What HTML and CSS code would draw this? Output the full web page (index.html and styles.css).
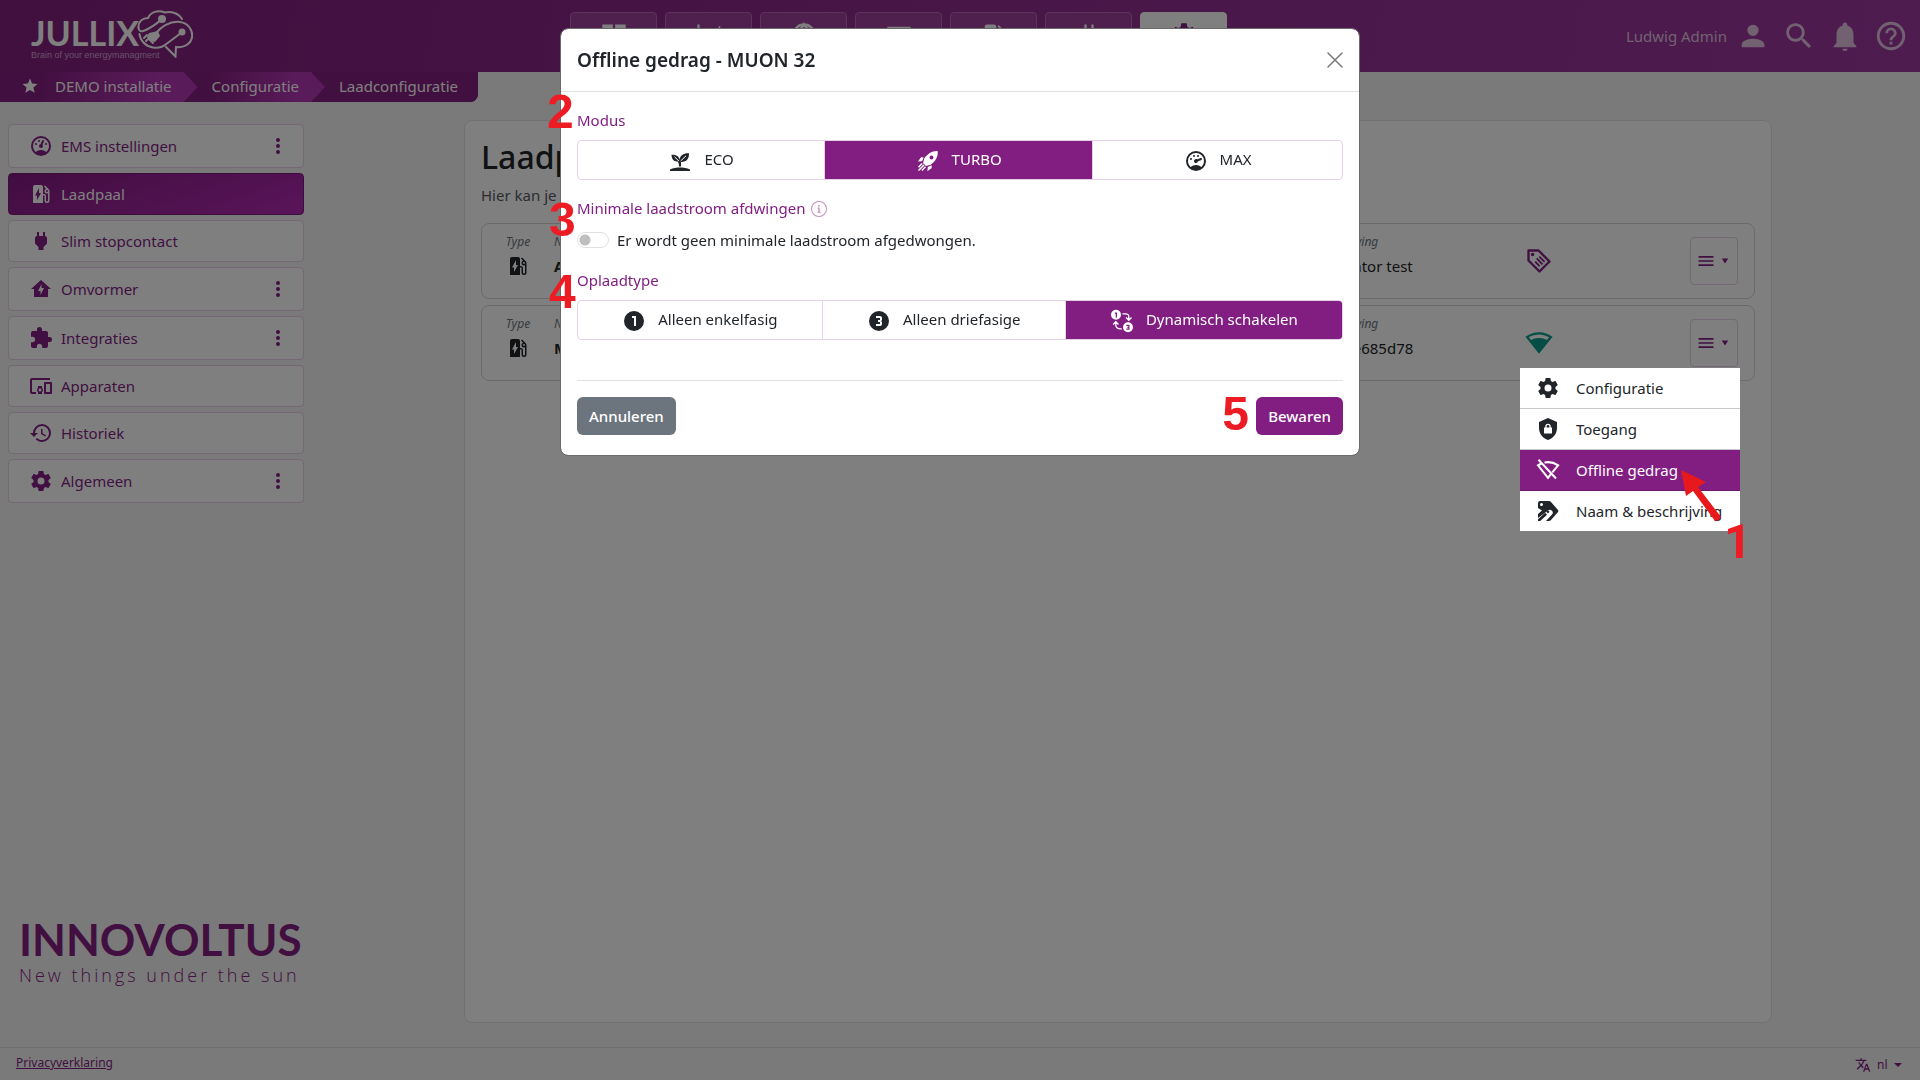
FILE: index.html
```html
<!DOCTYPE html>
<html lang="nl">
<head>
<meta charset="utf-8">
<meta name="viewport" content="width=device-width, initial-scale=1">
<title>Jullix - Laadconfiguratie</title>
<link rel="stylesheet" href="styles.css">
</head>
<body>
<svg class="sprite" aria-hidden="true">
  <symbol id="i-gauge" viewBox="0 0 24 24"><path d="M12,2A10,10 0 0,0 2,12A10,10 0 0,0 12,22A10,10 0 0,0 22,12A10,10 0 0,0 12,2M12,4A8,8 0 0,1 20,12C20,14.4 19,16.5 17.3,18C15.9,16.7 14,16 12,16C10,16 8.2,16.7 6.7,18C5,16.5 4,14.4 4,12A8,8 0 0,1 12,4M14,5.89C13.62,5.9 13.26,6.15 13.1,6.54L11.81,9.77L11.71,10C11,10.13 10.41,10.6 10.14,11.26C9.73,12.29 10.23,13.45 11.26,13.86C12.29,14.27 13.45,13.77 13.86,12.74C14.12,12.08 14,11.32 13.57,10.76L13.67,10.5L14.96,7.29L14.97,7.26C15.17,6.75 14.92,6.17 14.41,5.96C14.28,5.91 14.15,5.89 14,5.89M10,6A1,1 0 0,0 9,7A1,1 0 0,0 10,8A1,1 0 0,0 11,7A1,1 0 0,0 10,6M7,9A1,1 0 0,0 6,10A1,1 0 0,0 7,11A1,1 0 0,0 8,10A1,1 0 0,0 7,9M17,9A1,1 0 0,0 16,10A1,1 0 0,0 17,11A1,1 0 0,0 18,10A1,1 0 0,0 17,9Z"/></symbol>
  <symbol id="i-gauge-full" viewBox="0 0 24 24"><path d="M12,2A10,10 0 0,0 2,12A10,10 0 0,0 12,22A10,10 0 0,0 22,12A10,10 0 0,0 12,2M12,4A8,8 0 0,1 20,12C20,14.4 19,16.5 17.3,18C15.9,16.7 14,16 12,16C10,16 8.2,16.7 6.7,18C5,16.5 4,14.4 4,12A8,8 0 0,1 12,4M10,6A1,1 0 0,0 9,7A1,1 0 0,0 10,8A1,1 0 0,0 11,7A1,1 0 0,0 10,6M14,6A1,1 0 0,0 13,7A1,1 0 0,0 14,8A1,1 0 0,0 15,7A1,1 0 0,0 14,6M17.09,8.94C16.96,8.94 16.84,8.97 16.7,9L13.5,10.32L13.23,10.43C12.67,10 11.91,9.88 11.25,10.15C10.23,10.56 9.73,11.73 10.14,12.75C10.56,13.77 11.72,14.27 12.75,13.86C13.41,13.59 13.88,13 14,12.28L14.23,12.18L17.45,10.88L17.47,10.87C18,10.66 18.23,10.08 18.03,9.56C17.87,9.18 17.5,8.93 17.09,8.94M7,9A1,1 0 0,0 6,10A1,1 0 0,0 7,11A1,1 0 0,0 8,10A1,1 0 0,0 7,9Z"/></symbol>
  <symbol id="i-station" viewBox="0 0 24 24"><path d="M19.77,7.23L19.78,7.22L16.06,3.5L15,4.56L17.11,6.67C16.17,7.03 15.5,7.93 15.5,9A2.5,2.5 0 0,0 18,11.5C18.36,11.5 18.69,11.42 19,11.29V18.5A1,1 0 0,1 18,19.5A1,1 0 0,1 17,18.5V14A2,2 0 0,0 15,12H14V5A2,2 0 0,0 12,3H6A2,2 0 0,0 4,5V21H14V13.5H15.5V18.5A2.5,2.5 0 0,0 18,21A2.5,2.5 0 0,0 20.5,18.5V9C20.5,8.31 20.22,7.68 19.77,7.23M18,10A1,1 0 0,1 17,9A1,1 0 0,1 18,8A1,1 0 0,1 19,9A1,1 0 0,1 18,10M8,18V13.5H6L10,6V11H12L8,18Z"/></symbol>
  <symbol id="i-plug" viewBox="0 0 24 24"><path d="M16,7V3H14V7H10V3H8V7C7,7 6,8 6,9V14.5L9.5,18V21H14.5V18L18,14.5V9C18,8 17,7 16,7Z"/></symbol>
  <symbol id="i-home" viewBox="0 0 24 24"><path d="M12,3L2,12H5V20H19V12H22L12,3M11.5,18V14H9L12.5,7V11H15L11.5,18Z"/></symbol>
  <symbol id="i-puzzle" viewBox="0 0 24 24"><path d="M20.5,11H19V7C19,5.89 18.1,5 17,5H13V3.5A2.5,2.5 0 0,0 10.5,1A2.5,2.5 0 0,0 8,3.5V5H4A2,2 0 0,0 2,7V10.8H3.5C5,10.8 6.2,12 6.2,13.5C6.2,15 5,16.2 3.5,16.2H2V20A2,2 0 0,0 4,22H7.8V20.5C7.8,19 9,17.8 10.5,17.8C12,17.8 13.2,19 13.2,20.5V22H17A2,2 0 0,0 19,20V16H20.5A2.5,2.5 0 0,0 23,13.5A2.5,2.5 0 0,0 20.5,11Z"/></symbol>
  <symbol id="i-devices" viewBox="0 0 24 24"><path d="M3 6h18V4H3c-1.1 0-2 .9-2 2v12c0 1.1.9 2 2 2h4v-2H3V6zm10 6H9v1.78c-.61.55-1 1.33-1 2.22s.39 1.67 1 2.22V20h4v-1.78c.61-.55 1-1.34 1-2.22s-.39-1.67-1-2.22V12zm-2 5.5c-.83 0-1.5-.67-1.5-1.5s.67-1.5 1.5-1.5 1.5.67 1.5 1.5-.67 1.5-1.5 1.5zM22 8h-6c-.5 0-1 .5-1 1v10c0 .5.5 1 1 1h6c.5 0 1-.5 1-1V9c0-.5-.5-1-1-1zm-1 10h-4v-8h4v8z"/></symbol>
  <symbol id="i-history" viewBox="0 0 24 24"><path d="M13.5,8H12V13L16.28,15.54L17,14.33L13.5,12.25V8M13,3A9,9 0 0,0 4,12H1L4.96,16.03L9,12H6A7,7 0 0,1 13,5A7,7 0 0,1 20,12A7,7 0 0,1 13,19C11.07,19 9.32,18.21 8.06,16.94L6.64,18.36C8.27,20 10.5,21 13,21A9,9 0 0,0 22,12A9,9 0 0,0 13,3"/></symbol>
  <symbol id="i-cog" viewBox="0 0 24 24"><path d="M12,15.5A3.5,3.5 0 0,1 8.5,12A3.5,3.5 0 0,1 12,8.5A3.5,3.5 0 0,1 15.5,12A3.5,3.5 0 0,1 12,15.5M19.43,12.97C19.47,12.65 19.5,12.33 19.5,12C19.5,11.67 19.47,11.34 19.43,11L21.54,9.37C21.73,9.22 21.78,8.95 21.66,8.73L19.66,5.27C19.54,5.05 19.27,4.96 19.05,5.05L16.56,6.05C16.04,5.66 15.5,5.32 14.87,5.07L14.5,2.42C14.46,2.18 14.25,2 14,2H10C9.75,2 9.54,2.18 9.5,2.42L9.13,5.07C8.5,5.32 7.96,5.66 7.44,6.05L4.95,5.05C4.73,4.96 4.46,5.05 4.34,5.27L2.34,8.73C2.21,8.95 2.27,9.22 2.46,9.37L4.57,11C4.53,11.34 4.5,11.67 4.5,12C4.5,12.33 4.53,12.65 4.57,12.97L2.46,14.63C2.27,14.78 2.21,15.05 2.34,15.27L4.34,18.73C4.46,18.95 4.73,19.03 4.95,18.95L7.44,17.94C7.96,18.34 8.5,18.68 9.13,18.93L9.5,21.58C9.54,21.82 9.75,22 10,22H14C14.25,22 14.46,21.82 14.5,21.58L14.87,18.93C15.5,18.67 16.04,18.34 16.56,17.94L19.05,18.95C19.27,19.03 19.54,18.95 19.66,18.73L21.66,15.27C21.78,15.05 21.73,14.78 21.54,14.63L19.43,12.97Z"/></symbol>
  <symbol id="i-dots" viewBox="0 0 24 24"><circle cx="12" cy="6" r="2"/><circle cx="12" cy="12" r="2"/><circle cx="12" cy="18" r="2"/></symbol>
  <symbol id="i-star" viewBox="0 0 24 24"><path d="M12,17.27L18.18,21L16.54,13.97L22,9.24L14.81,8.62L12,2L9.19,8.62L2,9.24L7.45,13.97L5.82,21L12,17.27Z"/></symbol>
  <symbol id="i-account" viewBox="0 0 24 24"><path d="M12,4A4,4 0 0,1 16,8A4,4 0 0,1 12,12A4,4 0 0,1 8,8A4,4 0 0,1 12,4M12,14C16.42,14 20,15.79 20,18V20H4V18C4,15.79 7.58,14 12,14Z"/></symbol>
  <symbol id="i-search" viewBox="0 0 24 24"><path d="M15.5 14h-.79l-.28-.27C15.41 12.59 16 11.11 16 9.5 16 5.91 13.09 3 9.5 3S3 5.91 3 9.5 5.91 16 9.5 16c1.61 0 3.09-.59 4.23-1.57l.27.28v.79l5 4.99L20.49 19l-4.99-5zm-6 0C7.01 14 5 11.99 5 9.5S7.01 5 9.5 5 14 7.01 14 9.5 11.99 14 9.5 14z"/></symbol>
  <symbol id="i-bell" viewBox="0 0 24 24"><path d="M20,19V20H4V19L6,17V11C6,7.9 7.6,5.2 10.4,4.5V4A1.6,1.6 0 0,1 13.6,4V4.5C16.4,5.2 18,7.9 18,11V17L20,19M14,21A2,2 0 0,1 12,22.6A2,2 0 0,1 10,21"/></symbol>
  <symbol id="i-help" viewBox="0 0 24 24"><path d="M11,18H13V16H11V18M12,2A10,10 0 0,0 2,12A10,10 0 0,0 12,22A10,10 0 0,0 22,12A10,10 0 0,0 12,2M12,20C7.59,20 4,16.41 4,12C4,7.59 7.59,4 12,4C16.41,4 20,7.59 20,12C20,16.41 16.41,20 12,20M12,6A4,4 0 0,0 8,10H10A2,2 0 0,1 12,8A2,2 0 0,1 14,10C14,12 11,11.75 11,15H13C13,12.75 16,12.5 16,10A4,4 0 0,0 12,6Z"/></symbol>
  <symbol id="i-board" viewBox="0 0 24 24"><path d="M2 3h9v9H2zM13 3h9v9h-9zM2 14h9v7H2zM13 14h9v7h-9z"/></symbol>
  <symbol id="i-chart" viewBox="0 0 24 24"><path d="M2 3h2v16h18v2H2zM6 16l5-6 4 3 6-9 1 1-7 11-4-3-4 5z"/></symbol>
  <symbol id="i-globe" viewBox="0 0 24 24"><path fill="none" stroke="currentColor" stroke-width="2" d="M12 3a9 9 0 1 0 0 18 9 9 0 0 0 0-18M4 9c4-1 7-3 8-6 2 3 5 6 8 6M8 20c-2-7 0-13 4-17 4 4 6 10 4 17"/></symbol>
  <symbol id="i-battery" viewBox="0 0 24 24"><path d="M2 5h20v4H2zM2 11h20v9H2z"/></symbol>
  <symbol id="i-menu" viewBox="0 0 24 24"><path d="M3 6h18v2H3zM3 11h18v2H3zM3 16h18v2H3z"/></symbol>
  <symbol id="i-caret" viewBox="0 0 10 10"><path d="M1 2h8l-4 6z"/></symbol>
  <symbol id="i-tag" viewBox="0 0 24 24"><path fill="none" stroke="currentColor" stroke-width="2" stroke-linejoin="round" d="M3 3h8.600l9.400 9.400-8.600 8.600L3 11.600z"/><circle cx="6.500" cy="6.500" r="1.500"/><path fill="none" stroke="currentColor" stroke-width="1.500" d="M12.300 8.200l4.500 4.500M10 9.800l5 5M8.700 12.500l3.800 3.800"/></symbol>
  <symbol id="i-wifi" viewBox="0 0 24 24"><path fill-rule="evenodd" d="M12,2.700C7.790,2.700 3.700,4.110 .38,6.700L12,21.200 23.650,6.700C20.320,4.110 16.220,2.700 12,2.700M12,4.700C15.070,4.700 18.090,5.560 20.710,7.150L18.770,9.500C17,8.600 14.700,7.800 12,7.800 9.270,7.800 7,8.600 5.210,9.500L3.270,7.140C5.910,5.550 8.930,4.700 12,4.700Z"/></symbol>
  <symbol id="i-wifi-off" viewBox="0 0 24 24"><path fill="none" stroke="currentColor" stroke-width="2" d="M2.500 1.800L20 20.500M8.500 4.500C13 3.600 18 4.500 22.200 7.300L16.300 14.300M5.400 5.500L2 7.300 12 19.800 14.800 16.200"/></symbol>
  <symbol id="i-shield" viewBox="0 0 24 24"><path fill-rule="evenodd" d="M12,1L3,5V11C3,16.550 6.840,21.740 12,23 17.160,21.740 21,16.550 21,11V5L12,1M9.300,10V9.500A2.700,2.700 0 0 1 14.700,9.500V10.500H16V16.500H8V10.500H9.300M10.600,10.500H13.400V9.500A1.400,1.400 0 0 0 10.600,9.500Z"/></symbol>
  <symbol id="i-tag-edit" viewBox="0 0 24 24"><path fill-rule="evenodd" d="M2 4a2 2 0 0 1 2-2h9a3 3 0 0 1 2 1l7 8a1.500 1.500 0 0 1 0 2l-7 8a3 3 0 0 1-3 1h-2l6-6.500a2.600 2.600 0 0 0-4.300-3.700L2 19v-4l4-3.500L2 9zM5.500 4A1.500 1.500 0 1 0 5.500 7 1.500 1.500 0 0 0 5.500 4"/><path d="M2 20.300l7.200-6.500 1.800 1.900L4.200 22H2zM10.300 12.800l1-1q.9-.6 1.600.2t0 1.600l-1 1z"/></symbol>
  <symbol id="i-sprout" viewBox="0 0 24 24"><path d="M2 22v-1.500c3-1.400 6.500-1.900 10-1.900s7 .5 10 1.900V22zM11 17.500c0-2-.2-3.500-1.300-5C5.500 13 3.700 9.500 3.500 5.800c3.800-.3 7.600 1 8 5C12 6.500 15.500 3.900 21 4.200c.2 5.600-2.500 9-8 8.700V17.500z"/><path d="M6.500 7.800l4.500 4.400M18 6.900l-5.300 5" stroke="#fff" stroke-width="1"/></symbol>
  <symbol id="i-rocket" viewBox="0 0 24 24"><path fill-rule="evenodd" d="M21.700 2.100C16 1.800 11.500 5 8.300 9.500L7 14l3 3 4.700-1.300C19.500 12.500 22.200 8 21.700 2.100M15.500 6.500a2 2 0 1 1 0 4 2 2 0 0 1 0-4M7.800 8.400L5 8.300 2 12.600l4-.4zM15.600 16.200l.1 2.800-4.300 3.200.4-4.200z"/><path fill="none" stroke="currentColor" stroke-width="1.500" d="M6.200 14.500L2.500 18.200M8 16L2.500 21.500M9.500 17.800L5.800 21.500"/></symbol>
  <symbol id="i-one" viewBox="0 0 24 24"><path fill-rule="evenodd" d="M12 2a10 10 0 1 0 0 20 10 10 0 0 0 0-20M10 7h4v10h-2V9h-2z"/></symbol>
  <symbol id="i-three" viewBox="0 0 24 24"><path fill-rule="evenodd" d="M12 2a10 10 0 1 0 0 20 10 10 0 0 0 0-20M9 7h4a2 2 0 0 1 2 2v1.500a1.500 1.500 0 0 1-1.500 1.500 1.500 1.500 0 0 1 1.500 1.500V15a2 2 0 0 1-2 2H9v-2h4v-2h-2v-2h2V9H9z"/></symbol>
  <symbol id="i-switch" viewBox="0 0 24 24"><path fill-rule="evenodd" d="M6 .8a5 5 0 1 0 0 10 5 5 0 0 0 0-10M4.800 3.500h2.200v5H5.700V4.800h-.9zM18 13.200a5 5 0 1 0 0 10 5 5 0 0 0 0-10M16.300 15.700h3.200v5h-3.200v-1.200h1.900v-.8h-1v-1h1v-.8h-1.900z"/><path fill="none" stroke="currentColor" stroke-width="1.300" d="M12.500 4.800h3q3.300 0 3.300 3v3M16 8.500l2.800 2.800 2.700-2.800M11.800 19.800h-2q-4-.2-4-4v-2.500M3.200 15.500l2.600-2.700 2.700 2.700"/></symbol>
  <symbol id="i-info" viewBox="0 0 16 16"><path d="M8 15A7 7 0 1 1 8 1a7 7 0 0 1 0 14m0 1A8 8 0 1 0 8 0a8 8 0 0 0 0 16"/><path d="M6.500 6.600h2.200v4.200h1v1H6.300v-1h1V7.600h-.8zM7.200 4h1.500v1.600H7.200z"/></symbol>
  <symbol id="i-close" viewBox="0 0 16 16"><path fill="none" stroke="currentColor" stroke-width="1.500" stroke-linecap="round" d="M1 1l14 14M15 1L1 15"/></symbol>
  <symbol id="i-translate" viewBox="0 0 24 24"><path d="M12.870 15.070l-2.540-2.510.03-.03c1.740-1.940 2.980-4.170 3.710-6.530H17V4h-7V2H8v2H1v1.990h11.170C11.500 7.920 10.440 9.750 9 11.350 8.070 10.320 7.300 9.190 6.690 8h-2c.73 1.630 1.730 3.170 2.980 4.560l-5.090 5.020L4 19l5-5 3.110 3.110.76-2.040zM18.500 10h-2L12 22h2l1.120-3h4.750L21 22h2l-4.500-12zm-2.620 7l1.620-4.330L19.120 17h-3.240z"/></symbol>
</svg>

<header class="topbar">
  <a class="brand" href="#" aria-label="Jullix">
    <span class="brand-words"><span class="brand-name">JULLIX</span><span class="brand-tag">Brain of your energymanagment</span></span>
    <svg class="brain" viewBox="0 0 56 48" aria-hidden="true">
      <g fill="none" stroke="currentColor" stroke-width="2" stroke-linecap="round">
        <path d="M1.500 18C1 11 6 8 11 8 14 1.500 21 0 28 2.500 33 1 41 2.500 45 9"/>
        <path d="M1.500 18Q2 22 6 21C13 19 19 14 24 10"/>
        <path d="M2.500 24C3 30 8 36 16 37.500 22 38.500 26 37 30 33.500L44 23"/>
        <path d="M18 24C26 15 34 11 43 12 51 13 56 20 55 27 54 34 47 38 39 37L38.500 46.500 29 37"/>
        <path d="M9 31l3-3M10 25l-3 3M16 33l-4-4"/>
      </g>
      <circle cx="25" cy="9" r="4"/><circle cx="45" cy="22" r="3.500"/>
      <path d="M12 23l9-2 2 5-5 6-5-1-3-4z"/>
    </svg>
  </a>
  <nav class="tabs" aria-label="Hoofdmenu">
    <a class="tab" href="#" aria-label="Dashboard"><svg class="icon-lg"><use href="#i-board"/></svg></a>
    <a class="tab" href="#" aria-label="Grafieken"><svg class="icon-lg"><use href="#i-chart"/></svg></a>
    <a class="tab" href="#" aria-label="Energie"><svg class="icon-lg"><use href="#i-globe"/></svg></a>
    <a class="tab" href="#" aria-label="Batterij"><svg class="icon-lg"><use href="#i-battery"/></svg></a>
    <a class="tab" href="#" aria-label="Laden"><svg class="icon-lg"><use href="#i-station"/></svg></a>
    <a class="tab" href="#" aria-label="Stopcontacten"><svg class="icon-lg"><use href="#i-plug"/></svg></a>
    <a class="tab tab-active" href="#" aria-label="Configuratie"><svg class="icon-lg"><use href="#i-cog"/></svg></a>
  </nav>
  <div class="account">
    <a class="account-link" href="#">Ludwig Admin <svg class="icon-xl"><use href="#i-account"/></svg></a>
    <button class="bare" type="button" aria-label="Zoeken"><svg class="icon-xl"><use href="#i-search"/></svg></button>
    <button class="bare" type="button" aria-label="Meldingen"><svg class="icon-xl"><use href="#i-bell"/></svg></button>
    <button class="bare" type="button" aria-label="Hulp"><svg class="icon-xl"><use href="#i-help"/></svg></button>
  </div>
</header>

<nav class="crumbs" aria-label="Kruimelpad">
  <a class="crumb crumb-first" href="#"><svg class="icon-sm"><use href="#i-star"/></svg>DEMO installatie</a>
  <a class="crumb" href="#">Configuratie</a>
  <a class="crumb crumb-last" href="#" aria-current="page">Laadconfiguratie</a>
</nav>

<div class="layout">
  <aside class="sidebar">
    <nav class="side-nav" aria-label="Configuratie">
      <a class="side-item has-more" href="#"><svg class="icon"><use href="#i-gauge"/></svg><span>EMS instellingen</span><svg class="icon"><use href="#i-dots"/></svg></a>
      <a class="side-item side-active" href="#"><svg class="icon"><use href="#i-station"/></svg><span>Laadpaal</span></a>
      <a class="side-item" href="#"><svg class="icon"><use href="#i-plug"/></svg><span>Slim stopcontact</span></a>
      <a class="side-item has-more" href="#"><svg class="icon"><use href="#i-home"/></svg><span>Omvormer</span><svg class="icon"><use href="#i-dots"/></svg></a>
      <a class="side-item has-more" href="#"><svg class="icon"><use href="#i-puzzle"/></svg><span>Integraties</span><svg class="icon"><use href="#i-dots"/></svg></a>
      <a class="side-item" href="#"><svg class="icon"><use href="#i-devices"/></svg><span>Apparaten</span></a>
      <a class="side-item" href="#"><svg class="icon"><use href="#i-history"/></svg><span>Historiek</span></a>
      <a class="side-item has-more" href="#"><svg class="icon"><use href="#i-cog"/></svg><span>Algemeen</span><svg class="icon"><use href="#i-dots"/></svg></a>
    </nav>
    <div class="company">
      <div class="company-name">INNOVOLTUS</div>
      <div class="company-tag">New things under the sun</div>
    </div>
  </aside>

  <main class="panel">
    <h1>Laadpalen</h1>
    <p class="lead">Hier kan je de laadpalen beheren.</p>
    <div class="chargers">
      <article class="charger">
        <div class="cell cell-type"><span class="cell-label">Type</span><svg class="icon"><use href="#i-station"/></svg></div>
        <div class="cell"><span class="cell-label">Naam</span><strong>ALFEN</strong></div>
        <div class="cell"><span class="cell-label">Beschrijving</span><span>Simulator test</span></div>
        <svg class="icon-lg state"><use href="#i-tag"/></svg>
        <div class="actions">
          <button class="menu-button" type="button" aria-label="Acties"><svg class="icon-md"><use href="#i-menu"/></svg><svg class="caret"><use href="#i-caret"/></svg></button>
        </div>
      </article>
      <article class="charger">
        <div class="cell cell-type"><span class="cell-label">Type</span><svg class="icon"><use href="#i-station"/></svg></div>
        <div class="cell"><span class="cell-label">Naam</span><strong>MUON 32</strong></div>
        <div class="cell"><span class="cell-label">Beschrijving</span><span>d4cf7e685d78</span></div>
        <svg class="icon-lg state state-online"><use href="#i-wifi"/></svg>
        <div class="actions">
          <button class="menu-button" type="button" aria-label="Acties" aria-expanded="true"><svg class="icon-md"><use href="#i-menu"/></svg><svg class="caret"><use href="#i-caret"/></svg></button>
          <div class="menu">
            <button class="menu-item" type="button"><svg class="icon"><use href="#i-cog"/></svg>Configuratie</button>
            <button class="menu-item" type="button"><svg class="icon"><use href="#i-shield"/></svg>Toegang</button>
            <button class="menu-item menu-current" type="button"><svg class="icon"><use href="#i-wifi-off"/></svg>Offline gedrag</button>
            <button class="menu-item" type="button"><svg class="icon"><use href="#i-tag-edit"/></svg>Naam &amp; beschrijving</button>
            <svg class="pointer" viewBox="0 0 42 52" aria-hidden="true"><path d="M0 0l25 12-8 5L40 47l-2 3-4 1L12 21l-7 5z"/></svg>
            <span class="step step-1">1</span>
          </div>
        </div>
      </article>
    </div>
  </main>
</div>

<footer class="footer">
  <a href="#">Privacyverklaring</a>
  <label class="language"><svg class="icon-xs"><use href="#i-translate"/></svg>
    <select aria-label="Taal"><option>nl</option></select>
    <svg class="language-caret" viewBox="0 0 8 4"><path d="M0 0h8L4 4z"/></svg>
  </label>
</footer>

<div class="backdrop">
  <section class="dialog" role="dialog" aria-modal="true" aria-labelledby="dialog-title">
    <div class="dialog-head">
      <h2 id="dialog-title">Offline gedrag - MUON 32</h2>
      <button class="bare close" type="button" aria-label="Sluiten"><svg class="icon-close"><use href="#i-close"/></svg></button>
    </div>
    <form class="dialog-body">
      <fieldset class="field">
        <legend>Modus</legend>
        <div class="segments">
          <label class="segment"><input type="radio" name="mode"><svg class="icon"><use href="#i-sprout"/></svg>ECO</label>
          <label class="segment"><input type="radio" name="mode" checked><svg class="icon"><use href="#i-rocket"/></svg>TURBO</label>
          <label class="segment"><input type="radio" name="mode"><svg class="icon"><use href="#i-gauge-full"/></svg>MAX</label>
        </div>
        <span class="step step-2">2</span>
      </fieldset>
      <fieldset class="field">
        <legend>Minimale laadstroom afdwingen <svg class="icon-info"><use href="#i-info"/></svg></legend>
        <label class="switch-row"><input class="switch" type="checkbox">Er wordt geen minimale laadstroom afgedwongen.</label>
        <span class="step step-3">3</span>
      </fieldset>
      <fieldset class="field">
        <legend>Oplaadtype</legend>
        <div class="segments">
          <label class="segment"><input type="radio" name="phase"><svg class="icon"><use href="#i-one"/></svg>Alleen enkelfasig</label>
          <label class="segment"><input type="radio" name="phase"><svg class="icon"><use href="#i-three"/></svg>Alleen driefasige</label>
          <label class="segment"><input type="radio" name="phase" checked><svg class="icon"><use href="#i-switch"/></svg>Dynamisch schakelen</label>
        </div>
        <span class="step step-4">4</span>
      </fieldset>
      <div class="dialog-actions">
        <button class="btn btn-grey" type="button">Annuleren</button>
        <span class="save"><button class="btn btn-primary" type="submit">Bewaren</button><span class="step step-5">5</span></span>
      </div>
    </form>
  </section>
</div>
</body>
</html>
```
FILE: styles.css
```css
:root {
  --purple: #821e82;
  --purple-deep: #842080;
  --purple-light: #b436b6;
  --purple-border: #e6d0e6;
  --ink: #212529;
  --line: #dee0e4;
  --red: #ed1c24;
}

* { box-sizing: border-box; }

body {
  margin: 0;
  min-height: 100vh;
  display: flex;
  flex-direction: column;
  background: #f5f5f5;
  color: var(--ink);
  font: 15px/24px "Noto Sans", "Open Sans", sans-serif;
}

button, select { font: inherit; color: inherit; }
a { color: inherit; text-decoration: none; }
svg { fill: currentColor; flex: none; display: block; }

.sprite { display: none; }
.icon { width: 24px; height: 24px; }
.icon-xs { width: 16px; height: 16px; }
.icon-sm { width: 18px; height: 18px; }
.icon-md { width: 20px; height: 20px; }
.icon-lg { width: 28px; height: 28px; }
.icon-xl { width: 34px; height: 34px; }
.icon-info, .icon-close { width: 16px; height: 16px; }
.caret { width: 8px; height: 8px; }

.bare {
  padding: 0;
  border: 0;
  background: none;
}

/* Top bar */
.topbar {
  display: grid;
  grid-template-columns: 14fr auto 17fr;
  height: 72px;
  background: linear-gradient(100deg, #84207e, #9c389e);
}

.brand {
  display: flex;
  align-items: flex-start;
  padding: 10px 0 0 31px;
  color: #fff;
}
.brand-words {
  display: flex;
  flex-direction: column;
  width: 106px;
  padding-top: 5px;
  white-space: nowrap;
}
.brand-name { font: 700 34px/35px Lato, sans-serif; }
.brand-tag { font: 9px/10px "Liberation Sans", sans-serif; color: #d0a0d0; }
.brain { width: 56px; height: 48px; }

.tabs { display: flex; gap: 8px; padding-top: 12px; }
.tab {
  display: flex;
  justify-content: center;
  width: 87px;
  height: 48px;
  padding-top: 8px;
  border: 1px solid #b868b4;
  border-radius: 4px;
  background: #9e3e9c;
  color: #fff;
}
.tab-active { background: #fff; border-color: #fff; color: var(--purple); }

.account {
  display: flex;
  justify-content: flex-end;
  align-items: center;
  gap: 12px;
  padding-right: 12px;
  color: #e3c3e3;
}
.account-link { display: flex; align-items: center; gap: 9px; }

/* Breadcrumb trail */
.crumbs {
  display: flex;
  align-self: flex-start;
  height: 30px;
  border-bottom-right-radius: 8px;
  background: var(--purple-deep);
  overflow: hidden;
  color: #fff;
}
.crumb {
  display: flex;
  align-items: center;
  gap: 16px;
  margin-left: -14px;
  padding: 0 26px 2px 28px;
  background: linear-gradient(90deg, var(--purple-deep) 20%, var(--purple-light) 80%);
  clip-path: polygon(0 0, calc(100% - 14px) 0, 100% 50%, calc(100% - 14px) 100%, 0 100%);
}
.crumb:nth-child(1) { z-index: 3; }
.crumb:nth-child(2) { z-index: 2; }
.crumb-first { margin-left: 0; padding-left: 21px; }
.crumb-last { padding-right: 20px; background: var(--purple-deep); clip-path: none; }

/* Page body */
.layout { flex: 1; display: flex; }

.sidebar {
  flex: none;
  width: 316px;
  display: flex;
  flex-direction: column;
  justify-content: space-between;
  padding: 22px 12px 60px 8px;
}
.side-nav { display: flex; flex-direction: column; gap: 5px; }
.side-item {
  display: flex;
  align-items: center;
  gap: 8px;
  padding: 8px 13px 8px 20px;
  border: 1px solid var(--purple-border);
  border-radius: 4px;
  background: #fff;
  color: var(--purple);
}
.side-item span { flex: 1; }
.has-more { padding-top: 9px; padding-bottom: 9px; }
.side-active {
  border-color: #7a1a7a;
  background: linear-gradient(160deg, #821a80, #b42ab4);
  color: #fff;
}

.company { padding-left: 11px; color: var(--purple-deep); white-space: nowrap; }
.company-name { font: 700 44px/48px Lato, sans-serif; }
.company-tag { font: 300 18px/24px "Open Sans", sans-serif; letter-spacing: 3px; }

.panel {
  flex: 1;
  max-width: 1308px;
  margin: 18px auto 24px;
  padding: 16px;
  border: 1px solid #e2e2e2;
  border-radius: 8px;
  background: #fff;
}
h1 { margin: 0; font-size: 32px; line-height: 40px; font-weight: 500; }
.lead { margin: 6px 0 16px; color: #555a60; }

.chargers { display: flex; flex-direction: column; gap: 6px; }
.charger {
  display: grid;
  grid-template-columns: 72px 1fr 165px 120px 139px;
  height: 76px;
  padding: 9px 16px 9px 0;
  border: 1px solid #d4d4d6;
  border-radius: 8px;
}
.cell { display: flex; flex-direction: column; gap: 3px; }
.cell-type { align-items: center; }
.cell-label { font-size: 12px; line-height: 18px; font-style: italic; color: #6c757d; }
.state { place-self: center; color: var(--purple); }
.state-online { color: #0a9c8c; }

.actions { position: relative; place-self: center end; }
.menu-button {
  display: flex;
  align-items: center;
  justify-content: center;
  gap: 5px;
  width: 48px;
  height: 48px;
  padding: 0 4px 0 0;
  border: 1px solid var(--purple-border);
  border-radius: 4px;
  background: #fff;
  color: var(--purple);
}

.menu {
  position: absolute;
  z-index: 20;
  top: calc(100% + 1px);
  right: -2px;
  width: 220px;
  background: #fff;
}
.menu-item {
  display: flex;
  align-items: center;
  gap: 16px;
  width: 100%;
  height: 41px;
  padding: 0 16px;
  border: 0;
  border-bottom: 1px solid #c8c8ca;
  background: #fff;
  white-space: nowrap;
}
.menu-item:last-of-type { height: 40px; border-bottom: 0; }
.menu-current { background: var(--purple); border-color: #6b176b; color: #fff; }

/* Footer */
.footer {
  display: flex;
  justify-content: space-between;
  align-items: center;
  height: 33px;
  padding: 0 18px 2px 16px;
  border-top: 1px solid #dcdcdc;
  color: var(--purple);
  font-size: 12px;
}
.footer a { text-decoration: underline; }
.language { display: flex; align-items: center; gap: 6px; padding-top: 3px; }
.language select {
  appearance: none;
  padding: 0;
  border: 0;
  background: none;
}
.language-caret { width: 8px; height: 4px; }

/* Dialog */
.backdrop {
  position: fixed;
  inset: 0;
  z-index: 10;
  overflow: auto;
  background: rgb(0 0 0 / 50%);
}
.dialog {
  width: min(800px, 100% - 16px);
  margin: 28px auto;
  border: 1px solid #6a6a6a;
  border-radius: 8px;
  background: #fff;
  background-clip: padding-box;
}
.dialog-head {
  display: flex;
  align-items: center;
  justify-content: space-between;
  height: 63px;
  padding: 0 16px;
  border-bottom: 1px solid var(--line);
}
h2 { margin: 0; font-size: 19px; line-height: 30px; font-weight: 600; }
.close { color: #7a7a7a; }

.dialog-body { padding: 16px 16px 20px; }
.field {
  position: relative;
  min-width: 0;
  margin: 0 0 16px;
  padding: 0;
  border: 0;
}
legend {
  display: flex;
  align-items: center;
  gap: 6px;
  padding: 0;
  margin-bottom: 8px;
  color: var(--purple);
}
.icon-info { opacity: .5; margin-top: 2px; }

.segments {
  display: flex;
  height: 40px;
  border: 1px solid var(--purple-border);
  border-radius: 4px;
  overflow: hidden;
}
.segment {
  flex: 1 1 auto;
  display: flex;
  align-items: center;
  justify-content: center;
  padding-bottom: 2px;
}
.segment + .segment { border-left: 1px solid var(--purple-border); }
.segment input {
  appearance: none;
  width: 0;
  height: 0;
  margin: 0;
}
.segment .icon { margin: 4px 12px 0 0; }
.segment:has(:checked) { background: var(--purple); color: #fff; }

.switch-row { display: flex; align-items: center; gap: 8px; }
.switch {
  appearance: none;
  width: 32px;
  height: 16px;
  margin: 0;
  border: 1px solid var(--line);
  border-radius: 8px;
  background: radial-gradient(circle at 7px 7px, #bfbfbf 5px, #fff 6px);
}

.dialog-actions {
  display: flex;
  justify-content: space-between;
  margin-top: 40px;
  padding-top: 16px;
  border-top: 1px solid var(--line);
}
.save { position: relative; }
.btn {
  height: 38px;
  padding: 0 12px;
  border: 0;
  border-radius: 6px;
  color: #fff;
  font-weight: 500;
}
.btn-grey { background: #6c757d; }
.btn-primary { background: var(--purple); }

/* Numbered steps of the walkthrough */
.step {
  position: absolute;
  color: var(--red);
  font: 700 48px/48px "Liberation Sans", Arial, sans-serif;
}
.step-1 { left: 204px; top: 150px; font-family: Roboto, sans-serif; }
.step-2 { left: -30px; top: -52px; }
.step-3, .step-4 { left: -28px; top: -32px; }
.step-5 { right: 94px; top: -7px; }

.pointer {
  position: absolute;
  left: 161px;
  top: 102px;
  width: 42px;
  height: 52px;
  fill: #e8191c;
}
```
